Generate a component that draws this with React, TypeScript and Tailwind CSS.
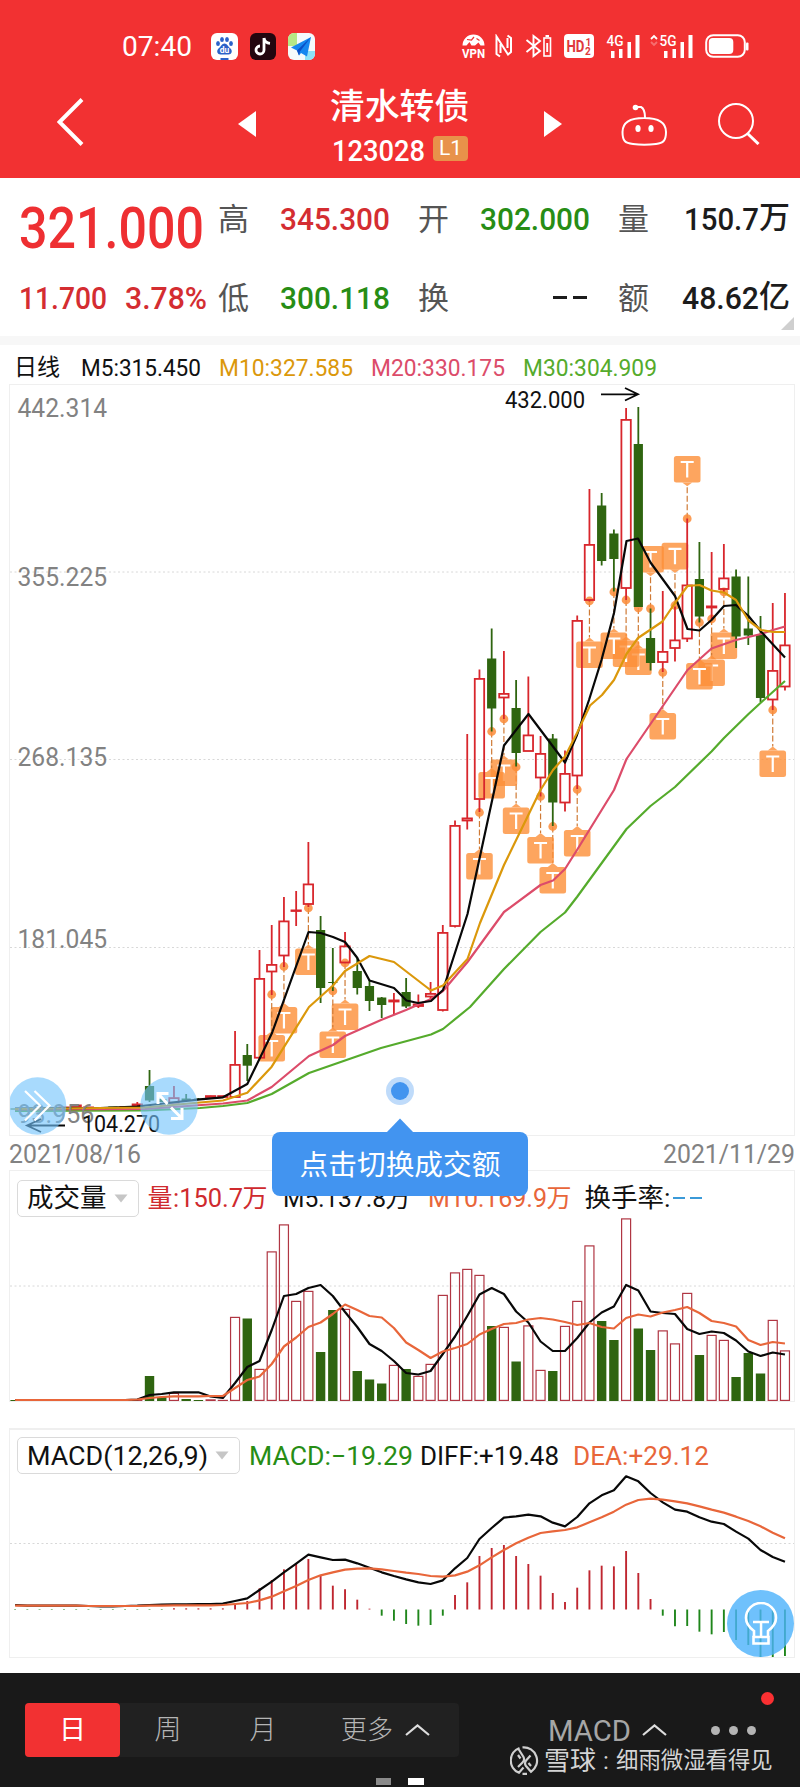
import type { ReactNode } from "react";

type Candle = [up: number, high: number, top: number, bottom: number, low: number];
type Point = [x: number, y: number];

const RED = "#d8262c";
const GREEN = "#2f6510";

const xAt = (i: number) => 15.1 + i * 12.22;

const candles: Candle[] = [
  [0, 1109, 1108.5, 1109.5, 1109],
  [0, 1109, 1108.5, 1109.5, 1109],
  [1, 1109, 1108, 1109, 1109],
  [1, 1109, 1108, 1109, 1109],
  [1, 1108, 1107, 1108, 1108],
  [1, 1106, 1105, 1107, 1107],
  [1, 1107, 1107, 1108, 1108],
  [1, 1108, 1107.5, 1108.5, 1108],
  [0, 1107, 1106.5, 1107.5, 1107],
  [1, 1107, 1106.5, 1107.5, 1107],
  [1, 1102, 1104, 1106, 1106],
  [0, 1070, 1086, 1100.5, 1102],
  [0, 1098, 1099, 1102, 1102],
  [1, 1086, 1097.7, 1102.7, 1103],
  [0, 1094, 1098.5, 1101, 1101],
  [0, 1098, 1098.7, 1100, 1100],
  [1, 1096, 1095.7, 1097, 1097],
  [1, 1096, 1095.7, 1097, 1097],
  [1, 1031, 1064.5, 1097, 1097],
  [0, 1044, 1055, 1065.7, 1081],
  [1, 950, 978.5, 1057.7, 1058],
  [1, 925, 964.5, 971.5, 995],
  [1, 897, 921, 955.5, 967],
  [1, 891, 910, 911, 926],
  [1, 842, 884, 904, 907],
  [0, 916, 930, 988, 1003],
  [0, 948, 982, 983, 991],
  [1, 932, 946, 962.5, 963],
  [0, 957, 971, 988, 994.5],
  [0, 980, 986, 1001, 1011],
  [0, 997, 997.5, 1005, 1018],
  [1, 993, 1000, 1001.5, 1015],
  [0, 978, 992, 1006.5, 1008],
  [1, 994.5, 1004, 1006, 1008],
  [1, 982, 993.5, 996.5, 1000],
  [1, 925, 932.5, 1010, 1011.5],
  [1, 820.5, 825.5, 926, 927.5],
  [1, 734, 818, 820.5, 829.5],
  [1, 669.5, 678.5, 799, 812],
  [0, 628.5, 658.5, 708.5, 731.5],
  [1, 651, 693.5, 697.5, 719],
  [0, 680, 708, 753, 766.5],
  [1, 676.5, 735, 751, 751],
  [1, 736, 753.5, 777.5, 796.5],
  [0, 734, 738.5, 802.5, 826],
  [1, 750.5, 773.5, 802.5, 811.5],
  [1, 615.5, 620.5, 775.5, 789],
  [1, 489, 544.5, 600, 601.5],
  [0, 493, 505.5, 561, 565.5],
  [0, 529.5, 533.5, 559, 591.5],
  [1, 408, 419.5, 588, 600],
  [0, 407, 444, 607, 607],
  [0, 608.5, 638, 663, 670.5],
  [1, 591, 651.5, 662, 672],
  [1, 606.5, 640, 648, 661.5],
  [1, 518.5, 585, 638.5, 642],
  [0, 542, 579, 616.5, 622.5],
  [1, 552, 606, 607.5, 619],
  [1, 544, 578, 589, 593],
  [0, 569.5, 576.5, 636.5, 648],
  [0, 576.5, 628.5, 635.5, 645],
  [0, 616, 634.5, 698, 702],
  [1, 603, 670.5, 699.5, 710],
  [1, 593, 645, 686.5, 690.5],
];

const m5: Point[] = [
  [15, 1108.5], [100, 1108], [137, 1106.5], [168, 1103], [200, 1099.3], [223, 1097.3], [247.3, 1084],
  [272, 1033], [308.5, 932], [320.6, 933], [333, 937], [345, 942], [357, 957.5], [369.5, 980.5],
  [394, 988], [406.5, 1000.5], [418, 1003], [431, 1001], [443, 990], [467.5, 914], [504, 745.5],
  [528.5, 714], [553, 746.5], [565, 762.5], [577, 735], [589, 700], [601.5, 660], [614, 613],
  [626.5, 541], [638, 538.5], [650.5, 562.5], [675, 596], [687.5, 629], [699.5, 630.5], [711.5, 620],
  [724, 606], [736, 605], [748.5, 616], [761, 631.5], [785, 657.5],
];
const m10: Point[] = [
  [15, 1109], [145, 1107.5], [200, 1102.5], [223, 1100.5], [247.3, 1092.7], [271.7, 1066.7], [309, 1007],
  [333, 985.5], [345, 971], [369.5, 956], [394, 962], [431, 990.5], [443, 985.5], [467.5, 959],
  [480, 923], [504, 865], [540.5, 790], [553, 770], [565, 756.5], [577, 733], [590, 705.5],
  [602, 695], [614, 680], [626.5, 654], [638, 638], [662.5, 621.5], [675, 603], [687.5, 586],
  [699.5, 585], [711.5, 590.5], [724, 592.5], [736, 600], [748.5, 620.5], [761, 630], [773, 632], [785, 632],
];
const m20: Point[] = [
  [15, 1109.5], [145, 1109], [223, 1103.5], [247.3, 1100.5], [271.7, 1087], [309, 1056], [333, 1045],
  [345, 1036], [381, 1020], [406, 1010], [431, 999], [443, 991], [467.5, 962], [504, 912],
  [540.5, 885], [553, 880.5], [565, 869], [577, 850], [614, 790], [626.5, 759], [687.5, 670],
  [711.5, 648.5], [736, 640], [761, 634], [773, 630], [785, 626.5],
];
const m30: Point[] = [
  [15, 1111], [145, 1110.5], [200, 1108], [223, 1106], [247.3, 1103], [271.7, 1094], [309, 1073],
  [345, 1060.5], [381, 1048], [431, 1034.5], [443, 1029], [470, 1007], [504, 969], [540.5, 932],
  [565, 912.5], [577, 897], [626.5, 829], [650.5, 806], [675, 787], [711.5, 751.5], [724, 738],
  [748.5, 714], [761, 702.5], [785, 681],
];

// [candle index, anchor y, 1 when the flag hangs above the candle]
const flags: [number, number, number][] = [
  [21, 994.5, 0], [22, 966.5, 0], [24, 908, 0], [26, 991, 0], [27, 963, 0], [38, 812.5, 0], [39, 731.5, 0],
  [40, 719, 0], [41, 767, 0], [43, 796.5, 0], [44, 826.5, 0], [46, 789.5, 0], [47, 601, 0], [49, 592, 0],
  [50, 600, 0], [51, 608, 0], [52, 608.7, 1], [53, 672.5, 0], [54, 605.5, 1], [55, 518.7, 1], [56, 622.5, 0],
  [57, 619, 0], [58, 592, 0], [62, 710, 0],
];

const volumeTops = [
  1400, 1400, 1400, 1400, 1400, 1400, 1400, 1400, 1400, 1400, 1400, 1376, 1397, 1393, 1399, 1400, 1399.5, 1400,
  1317, 1318.5, 1369, 1251.5, 1224.5, 1301, 1291, 1352, 1310, 1309, 1371, 1379.5, 1383.5, 1365, 1369, 1376,
  1364, 1295, 1272.5, 1269, 1275, 1326, 1327, 1361.5, 1325.5, 1370, 1371, 1326, 1301, 1245.5, 1321, 1340,
  1218.5, 1328.5, 1350, 1330.5, 1343.5, 1293, 1355, 1335, 1340, 1377, 1353, 1373.5, 1320, 1350.5,
];
const volM5 = [
  1400, 1400, 1400, 1400, 1400, 1400, 1400, 1400, 1400, 1400, 1399.5, 1395, 1394, 1392.3, 1392.3, 1392.3, 1396.5, 1398,
  1383, 1367, 1361, 1330, 1296, 1294, 1288, 1285, 1296, 1312, 1327, 1344, 1351, 1361, 1373, 1374.5, 1371,
  1354, 1336.5, 1316, 1294.5, 1288, 1294, 1311.5, 1322.5, 1341.5, 1351, 1351, 1338, 1322.5, 1312.5, 1306.5,
  1285, 1290.5, 1311.5, 1313, 1314, 1329, 1334, 1331.5, 1333, 1340.5, 1351.5, 1356, 1352.5, 1354.5,
];
const volM10 = [
  1400, 1400, 1400, 1400, 1400, 1400, 1400, 1400, 1400, 1400, 1399.5, 1398, 1397, 1396.3, 1396.3, 1396.3, 1396, 1396,
  1388, 1380, 1376.5, 1364, 1346.5, 1337.5, 1327, 1322.5, 1314, 1304.5, 1310, 1316, 1317.5, 1328, 1342.5, 1350,
  1358, 1351.5, 1348, 1344, 1334.5, 1329, 1324, 1323, 1319.5, 1318, 1319.5, 1322, 1325, 1323, 1327, 1328.5,
  1318, 1314.5, 1316.5, 1312.5, 1310, 1307, 1313, 1321, 1323, 1326.5, 1340, 1345, 1342, 1343.5,
];

// MACD series are kept at three units per pixel, counted down from y = 1420
const macdBars = [
  570, 570, 570, 570, 570, 570, 570, 570, 570, 570, 570, 570, 570, 565, 565, 565, 565, 565, 552, 543, 505, 480,
  448, 432, 417, 465, 497, 508, 539, 566, 587, 602, 612, 617, 615, 587, 525, 487, 408, 384, 375, 408, 432, 467,
  519, 546, 503, 451, 437, 439, 393, 459, 537, 587, 619, 618, 635, 643, 636, 660, 675, 712, 715, 708,
];
const diff = [
  555, 557, 557, 557, 557, 557, 558, 559, 559, 558, 557, 555, 554, 553, 553, 552, 552, 551, 543, 535, 510, 485,
  457, 431, 404, 412, 420, 419, 430, 443, 457, 468, 478, 487, 492, 481, 445, 414, 357, 324, 293, 289, 284, 289,
  308, 319, 291, 250, 226, 211, 169, 184, 219, 247, 269, 275, 292, 305, 312, 335, 356, 390, 411, 425,
];
const dea = [
  557, 557, 557, 557, 557, 557, 558, 558, 558, 558, 558, 557, 557, 556, 556, 556, 556, 555, 552, 549, 541, 530,
  514, 498, 480, 466, 457, 449, 446, 445, 448, 453, 458, 462, 468, 470, 466, 455, 436, 412, 390, 370, 353, 339,
  334, 330, 322, 307, 292, 275, 254, 240, 236, 239, 244, 250, 259, 269, 278, 290, 303, 319, 338, 355,
];

const toPoints = (points: Point[]) => points.map((p) => p.join(",")).join(" ");
const series = (ys: number[]) => toPoints(ys.map((y, i) => [xAt(i), y]));
const macdY = (v: number) => 1420 + v / 3;

function Line({ points, color }: { points: string; color: string }) {
  return <polyline points={points} fill="none" stroke={color} strokeWidth="2.2" strokeLinejoin="round" />;
}

function GridLine({ y }: { y: number }) {
  return <line x1="10" x2="794" y1={y} y2={y} stroke="#d8d8d8" strokeDasharray="2 2.5" />;
}

function Flag({ i, y, above }: { i: number; y: number; above: boolean }) {
  const x = xAt(i);
  const top = above ? y - 62.7 : y + 40.5;
  const tip = above ? y - 32.5 : y + 36.5;
  const base = above ? top + 26.5 : top;
  return (
    <g>
      <line x1={x} x2={x} y1={y} y2={tip} stroke="#cf7a35" strokeWidth="1.2" strokeDasharray="6 2.5" />
      <circle cx={x} cy={y} r="4.4" fill="#fb8c38" opacity="0.85" />
      <g opacity="0.8">
        <path d={`M${x - 5} ${base}L${x} ${tip}L${x + 5} ${base}Z`} fill="#fd8f38" />
        <rect x={x - 13.3} y={top} width="26.6" height="26.6" rx="2.5" fill="#fd8f38" />
      </g>
      <path d={`M${x - 6.5} ${top + 6}H${x + 6.5}M${x} ${top + 6}V${top + 21.5}`} stroke="#fff" strokeWidth="2.2" />
    </g>
  );
}

function CandleBar({ i, data }: { i: number; data: Candle }) {
  const [up, high, top, bottom, low] = data;
  const x = xAt(i);
  if (!up) {
    return (
      <g fill={GREEN}>
        <rect x={x - 0.9} y={high} width="1.8" height={low - high} />
        <rect x={x - 4.6} y={top} width="9.2" height={bottom - top} />
      </g>
    );
  }
  return (
    <g stroke={RED} strokeWidth="1.8" fill="none">
      <path d={`M${x} ${high}V${top}M${x} ${bottom}V${low}`} />
      <rect x={x - 4.7} y={top + 0.4} width="9.4" height={Math.max(bottom - top - 0.4, 0.3)} />
    </g>
  );
}

function AxisLabel({ y, children }: { y: number; children: string }) {
  return (
    <text x="17.5" y={y} fontSize="25" fill="#828282" textLength={children.length * 12.8} lengthAdjust="spacingAndGlyphs">
      {children}
    </text>
  );
}

function PriceChart() {
  return (
    <svg className="block w-full" viewBox="10 385 784 750">
      <GridLine y={572} />
      <GridLine y={759.5} />
      <GridLine y={947.5} />
      {[...flags].reverse().map(([i, y, above]) => (
        <Flag key={i} i={i} y={y} above={above === 1} />
      ))}
      {candles.map((c, i) => (
        <CandleBar key={i} i={i} data={c} />
      ))}
      <Line points={toPoints(m30)} color="#55ab2c" />
      <Line points={toPoints(m20)} color="#dc4c6a" />
      <Line points={toPoints(m5)} color="#080808" />
      <Line points={toPoints(m10)} color="#db980b" />
      <AxisLabel y={417}>442.314</AxisLabel>
      <AxisLabel y={585.5}>355.225</AxisLabel>
      <AxisLabel y={766}>268.135</AxisLabel>
      <AxisLabel y={948}>181.045</AxisLabel>
      <AxisLabel y={1122.5}>93.956</AxisLabel>
      <g fill="#111" fontSize="23">
        <text x="505" y="407.5" textLength="80" lengthAdjust="spacingAndGlyphs">432.000</text>
        <text x="82" y="1132" textLength="78" lengthAdjust="spacingAndGlyphs">104.270</text>
      </g>
      <g fill="none" stroke="#080808" strokeWidth="1.8">
        <path d="M601 394.3H637M625 388L638 394.3L625 400.5" />
        <path d="M65 1125.5H28M41 1119L27 1125.5L41 1132" />
      </g>
      <circle cx="37.5" cy="1106" r="28.8" fill="#72c4fb" opacity="0.62" />
      <circle cx="169" cy="1106" r="28.8" fill="#72c4fb" opacity="0.62" />
      <g fill="none" stroke="#fff" strokeWidth="2.2">
        <path d="M25 1091L40 1105.5L25 1120.500M34.500 1091L49.500 1105.500L34.500 1120.500" />
        <path strokeWidth="3" d="M158 1104V1093.500H168.500M158.500 1094L167.500 1104M171 1118.500H182V1108M181.500 1118L171 1107.500" />
      </g>
    </svg>
  );
}

function VolumeChart() {
  return (
    <svg className="block w-full" viewBox="10 1217 784 184">
      <GridLine y={1286} />
      {volumeTops.map((top, i) =>
        candles[i][0] ? (
          <rect key={i} x={xAt(i) - 4.5} y={top + 0.4} width="9" height={Math.max(1400 - top, 0.5)} fill="none" stroke="#b03643" strokeWidth="1.2" />
        ) : (
          <rect key={i} x={xAt(i) - 4.7} y={top} width="9.4" height={1401 - top} fill={GREEN} />
        )
      )}
      <Line points={series(volM5)} color="#080808" />
      <Line points={series(volM10)} color="#e8663a" />
    </svg>
  );
}

function MacdChart() {
  return (
    <svg className="block w-full" viewBox="10 1475 784 182">
      <GridLine y={1543.5} />
      {macdBars.map((v, i) => (
        <line key={i} x1={xAt(i)} x2={xAt(i)} y1={1609.5} y2={macdY(v)} stroke={v < 568 ? "#bf2630" : "#1f861b"} strokeWidth="1.9" />
      ))}
      <Line points={series(diff.map(macdY))} color="#080808" />
      <Line points={series(dea.map(macdY))} color="#e8663a" />
    </svg>
  );
}

// Scales a run of digits and letters to the width of the narrow face
function Fit({ width, size, color, weight = 500, children }: { width: number; size: number; color: string; weight?: number; children: string }) {
  return (
    <svg className="block shrink-0 overflow-visible" width={width} height={size}>
      <text y={size * 0.86} fontSize={size} fontWeight={weight} fill={color} textLength={width} lengthAdjust="spacingAndGlyphs">
        {children}
      </text>
    </svg>
  );
}

function StatusBar() {
  return (
    <div className="flex h-7 items-center pl-[122px]">
      <Fit width={70} size={28} color="#fff" weight={400}>07:40</Fit>
      <svg className="ml-[19px] block" width="27" height="27" viewBox="0 0 27 27">
        <rect width="27" height="27" rx="6" fill="#fff" />
        <g fill="#2b62c9">
          <ellipse cx="7" cy="10.500" rx="1.900" ry="2.500" />
          <ellipse cx="11" cy="6.500" rx="1.900" ry="2.500" />
          <ellipse cx="16" cy="6.500" rx="1.900" ry="2.500" />
          <ellipse cx="20" cy="10.500" rx="1.900" ry="2.500" />
          <path d="M13.500 10.500C16 10.500 17 13.500 19.500 15.500C22 18 20.500 21.500 17.500 21.500H9.500C6.500 21.500 5 18 7.500 15.500C10 13.500 11 10.500 13.500 10.500Z" />
          <rect x="9.500" y="25" width="8" height="2" />
        </g>
        <text x="13.500" y="20" fontSize="8.500" fontWeight="700" textAnchor="middle" fill="#fff">du</text>
      </svg>
      <svg className="ml-3 block" width="26" height="27" viewBox="0 0 26 27">
        <rect width="26" height="27" rx="6" fill="#23060f" />
        <path d="M14 5V17A4 4 0 1 1 10 13M14 5C14.500 8.500 16.500 10 20 10.300" fill="none" stroke="#fff" strokeWidth="2.800" />
      </svg>
      <svg className="ml-3 block" width="27" height="27" viewBox="0 0 27 27">
        <rect width="27" height="27" rx="6" fill="#f4fafb" />
        <path d="M6 0H9V13H0V6A6 6 0 0 1 6 0Z" fill="#b6e886" />
        <path d="M17 18H27V21A6 6 0 0 1 21 27H17Z" fill="#8fe2f7" />
        <path d="M23 4L3 14.500L9 17.500L11 22.500L13 20L19 23.500Z" fill="#1687ef" />
        <path d="M23 4L9 17.500L11 22.500L12 18.500Z" fill="#0a4fc6" />
      </svg>

      <svg className="ml-[147px] block overflow-visible" width="23" height="24" viewBox="0 0 23 24">
        <path d="M0.500 11.500A11 11 0 0 1 22.500 11.500H18.500L16.500 8.500L13 11.500H9.500L7.500 8L4.500 11.500Z" fill="#fff" />
        <path d="M5 5.500L9.500 6L12 3M14.500 4.500L17.500 6.500" stroke="#f23132" strokeWidth="1.200" fill="none" />
        <text x="0" y="23.500" fontSize="13.500" fontWeight="700" fill="#fff" textLength="23" lengthAdjust="spacingAndGlyphs">VPN</text>
      </svg>
      <svg className="ml-[10px] block" width="18" height="24" viewBox="0 0 18 24" fill="none" stroke="#fff" strokeWidth="2">
        <path d="M5 22.500L1.500 20V2.500L13 20.500L16 18V4L12.500 1.500M5.500 10V19M12.500 4V14" />
      </svg>
      <svg className="ml-3 block" width="27" height="24" viewBox="0 0 27 24" fill="none" stroke="#fff" strokeWidth="1.900">
        <path d="M1.500 6L15 17L8.500 22V2L15 7L1.500 18" />
        <rect x="19" y="4" width="6.500" height="18" strokeWidth="1.600" />
        <path d="M20.500 2H24M22.200 9V18" />
      </svg>
      <svg className="ml-[12px] block" width="30" height="24" viewBox="0 0 30 24">
        <rect width="30" height="24" rx="4" fill="#fff" />
        <text x="2.500" y="18" fontSize="17" fontWeight="700" fill="#e0393c" textLength="18" lengthAdjust="spacingAndGlyphs">HD</text>
        <text x="21.500" y="11.500" fontSize="10" fontWeight="700" fill="#e0393c">1</text>
        <text x="21" y="21" fontSize="10" fontWeight="700" fill="#e0393c">2</text>
      </svg>
      <svg className="ml-3 block overflow-visible" width="34" height="24" viewBox="0 0 34 24" fill="#fff">
        <text x="0.500" y="12" fontSize="14.500" fontWeight="500" textLength="17" lengthAdjust="spacingAndGlyphs">4G</text>
        <path d="M5 17H8.500V24H5ZM13 15H16.500V24H13ZM21.500 8H25V24H21.500ZM29.500 1H33.500V24H29.500Z" />
      </svg>
      <svg className="ml-[10px] block overflow-visible" width="43" height="24" viewBox="0 0 43 24" fill="#fff">
        <path d="M1 5L4 2L7 5" fill="none" stroke="#fff" strokeWidth="1.800" />
        <path d="M1 8L4 11L7 8" fill="none" stroke="#fff" strokeWidth="1.800" opacity="0.3" />
        <text x="9.500" y="12" fontSize="14.500" fontWeight="500" textLength="17" lengthAdjust="spacingAndGlyphs">5G</text>
        <path d="M14 17H17.500V24H14ZM22.500 15H26V24H22.500ZM30.500 8H34V24H30.500ZM38.500 1H42.500V24H38.500Z" />
      </svg>
      <svg className="ml-3 block" width="44" height="24" viewBox="0 0 44 24">
        <rect x="1.200" y="1.200" width="38.600" height="21.600" rx="7" fill="none" stroke="#fff" strokeWidth="2" />
        <rect x="3.800" y="4" width="24.500" height="16" rx="4" fill="#fff" />
        <rect x="41" y="8.500" width="2.500" height="8" rx="1" fill="#fff" />
      </svg>
    </div>
  );
}

function Header() {
  return (
    <header className="h-[178px] bg-[#f23132] pt-8">
      <StatusBar />
      <div className="mt-[23px] flex h-[78px] items-center">
        <svg className="ml-[57px] block" width="27" height="48" viewBox="0 0 27 48" fill="none" stroke="#fff" strokeWidth="4">
          <path d="M25 1.500L2.500 24L25 46.500" />
        </svg>
        <svg className="ml-[154px] mt-[3px] block" width="18" height="26" viewBox="0 0 18 26">
          <path d="M18 0V26L0 13Z" fill="#fff" />
        </svg>
        <div className="ml-[74px] w-[140px] pt-[6px]">
          <h1 className="text-[34.800px] font-medium leading-[42px] text-white">清水转债</h1>
          <div className="mt-[5px] flex items-center">
            <div className="ml-[2px] mt-[2px]">
              <Fit width={93} size={30} color="#fff">123028</Fit>
            </div>
            <span className="ml-2 flex h-[25px] w-[35px] items-center justify-center rounded-sm bg-[#e8924a] text-[21px] text-white">L1</span>
          </div>
        </div>
        <svg className="ml-[74px] mt-[3px] block" width="18" height="26" viewBox="0 0 18 26">
          <path d="M0 0V26L18 13Z" fill="#fff" />
        </svg>
        <svg className="ml-[59px] mt-[6px] block" width="46" height="42" viewBox="0 0 46 42" fill="none" stroke="#fff" strokeWidth="2">
          <path d="M16 3H20Q24 5 24 13.500M23 14C37 14 45 18 45 28C45 37 42 39 35 40Q23 41.500 12 40C4 39 1.500 37 1.500 28C1.500 18 9 14 23 14Z" />
          <circle cx="14.500" cy="3.500" r="2.800" fill="#fff" stroke="none" />
          <ellipse cx="17" cy="24.500" rx="2.600" ry="3.500" fill="#fff" stroke="none" />
          <ellipse cx="30" cy="24.500" rx="2.600" ry="3.500" fill="#fff" stroke="none" />
        </svg>
        <svg className="ml-[51px] mt-[3px] block" width="42" height="42" viewBox="0 0 42 42" fill="none" stroke="#fff" strokeWidth="2">
          <circle cx="18" cy="18" r="17" />
          <path d="M29.500 30.500L40.500 41" strokeWidth="3" />
        </svg>
      </div>
    </header>
  );
}

function Label({ children }: { children: string }) {
  return <span className="pt-[2px] text-[31px] font-normal leading-8 text-[#555]">{children}</span>;
}

function Value({ children }: { children: ReactNode }) {
  return <span className="flex items-center justify-end text-[31px] font-medium leading-8 text-[#1c1c1c]">{children}</span>;
}

function QuotePanel() {
  return (
    <section className="relative h-[167px] border-b-[9px] border-[#f7f7f7] bg-white pl-[19px] pt-6">
      <div className="grid grid-cols-[171px_31px_113px_31px_113px_31px_113px] grid-rows-[32px_32px] gap-x-7 gap-y-[47px]">
        <div className="-mt-[3px]">
          <Fit width={185} size={57} color="#ee2f32">321.000</Fit>
        </div>
        <Label>高</Label>
        <div className="flex items-center justify-end"><Fit width={110} size={32} color="#d42d31">345.300</Fit></div>
        <Label>开</Label>
        <div className="flex items-center justify-end"><Fit width={110} size={32} color="#278d15">302.000</Fit></div>
        <Label>量</Label>
        <Value><Fit width={75} size={32} color="#1c1c1c">150.7</Fit>万</Value>
        <div className="flex items-center gap-[18px]">
          <Fit width={88} size={32} color="#d42d31">11.700</Fit>
          <Fit width={82} size={32} color="#d42d31">3.78%</Fit>
        </div>
        <Label>低</Label>
        <div className="flex items-center justify-end"><Fit width={110} size={32} color="#278d15">300.118</Fit></div>
        <Label>换</Label>
        <div className="flex items-center justify-end gap-[6px] pr-[3px]">
          <i className="h-[3px] w-[14px] bg-[#1c1c1c]" />
          <i className="h-[3px] w-[14px] bg-[#1c1c1c]" />
        </div>
        <Label>额</Label>
        <Value><Fit width={77} size={32} color="#1c1c1c">48.62</Fit>亿</Value>
      </div>
      <svg className="absolute bottom-[6px] right-[6px]" width="13" height="13" viewBox="0 0 13 13">
        <path d="M13 0V13H0Z" fill="#cfcfcf" />
      </svg>
    </section>
  );
}

function Dropdown({ children }: { children: ReactNode }) {
  return (
    <div className="flex h-[37px] items-center gap-[7px] rounded-[5px] border border-[#dadada] bg-white pl-[9px] pr-[10px] text-[26.500px] leading-none text-[#111]">
      {children}
      <svg className="block" width="14" height="9" viewBox="0 0 14 9">
        <path d="M0.500 0.500H13.500L7 8.500Z" fill="#c6c6c6" />
      </svg>
    </div>
  );
}

function Chevron() {
  return (
    <svg className="block" width="25" height="12" viewBox="0 0 25 12" fill="none" stroke="#ddd" strokeWidth="2.200">
      <path d="M1 11L12.500 1.500L24 11" />
    </svg>
  );
}

function BottomBar() {
  return (
    <footer className="relative h-[114px] bg-[#191919] pt-[30px] text-[27px] font-light text-[#b5b5b5]">
      <div className="flex items-center pl-[25px]">
        <div className="flex h-[54px] w-[434px] items-center rounded bg-[#212121]">
          <span className="flex h-full w-[95px] items-center justify-center rounded bg-[#f23132] pt-[1px] font-normal text-white">日</span>
          <span className="w-24 pt-[1px] text-center">周</span>
          <span className="w-[94px] pt-[1px] text-center">月</span>
          <span className="ml-[31px] pt-[1px] text-[26px]">更多</span>
          <span className="ml-[12px]"><Chevron /></span>
        </div>
        <div className="ml-[89px]"><Fit width={83} size={29} color="#a6a6a6" weight={400}>MACD</Fit></div>
        <span className="ml-[11px]"><Chevron /></span>
        <span className="ml-[44px] flex gap-[9px]">
          <i className="size-[9px] rounded-full bg-[#b4b4b4]" />
          <i className="size-[9px] rounded-full bg-[#b4b4b4]" />
          <i className="size-[9px] rounded-full bg-[#b4b4b4]" />
        </span>
      </div>
      <i className="absolute right-[26px] top-[19px] size-[13px] rounded-full bg-[#fa3032]" />
      <div className="absolute left-[510px] top-[73px] flex h-[29px] items-center text-[#d4d4d4]">
        <svg className="block" width="29" height="29" viewBox="0 0 29 29" fill="none" stroke="#d0d0d0" strokeWidth="2.200">
          <path d="M9.500 2A13.300 13.300 0 0 0 9 26.800L13.500 21.500M12.500 1.400A13.300 13.300 0 0 1 21 25.800L16 20Q13.800 17 16.500 14L20.500 9.500M8.500 3L13.500 11Q15 14 12.500 16.500L8 21M12.500 27.800H17M8 9L10.500 12.500M21 20L18.500 17" />
        </svg>
        <span className="ml-[5px] text-[26px] font-normal leading-none">雪球</span>
        <span className="w-[20px] text-center text-[24px] font-normal leading-none">:</span>
        <span className="text-[22.400px] font-normal leading-none">细雨微湿看得见</span>
      </div>
      <div className="absolute left-[376px] top-[105px] flex gap-[17px]">
        <i className="h-[7px] w-[15px] bg-[#8a8a8a]" />
        <i className="h-[7px] w-4 bg-white" />
      </div>
    </footer>
  );
}

export default function App() {
  return (
    <div className="h-[1787px] w-[800px] overflow-hidden bg-white font-[Roboto,'Noto_Sans_CJK_SC',sans-serif]">
      <Header />
      <QuotePanel />

      <div className="flex h-[39px] items-center pl-[14px] pt-[5px]">
        <span className="w-[67px] text-[23px] leading-none text-[#111]">日线</span>
        <div className="flex gap-[18px]">
          <Fit width={120} size={24.5} color="#111" weight={400}>M5:315.450</Fit>
          <Fit width={134} size={24.5} color="#db980b" weight={400}>M10:327.585</Fit>
          <Fit width={134} size={24.5} color="#dc4c6a" weight={400}>M20:330.175</Fit>
          <Fit width={134} size={24.5} color="#55ab2c" weight={400}>M30:304.909</Fit>
        </div>
      </div>

      <section className="relative ml-[9px] w-[786px] border border-[#efefef]">
        <PriceChart />
        <svg className="absolute left-[376px] top-[692px]" width="28" height="28" viewBox="0 0 28 28">
          <circle cx="14" cy="14" r="14" fill="#bfdbfa" />
          <circle cx="14" cy="14" r="9" fill="#4294ef" />
        </svg>
        <div className="absolute left-[262px] top-[747px] z-10 flex h-[64px] w-[256px] items-center justify-center rounded-lg bg-[#4294f0] pt-[2px] text-[28.700px] leading-none text-white">
          点击切换成交额
          <svg className="absolute -top-[14px] left-[114px]" width="28" height="15" viewBox="0 0 28 15">
            <path d="M0 15L14 0.500L28 15Z" fill="#4294f0" />
          </svg>
        </div>
      </section>

      <div className="flex h-[34px] items-center justify-between pl-[9px] pr-[5px] pt-[1px]">
        <Fit width={132} size={25} color="#828282" weight={400}>2021/08/16</Fit>
        <Fit width={132} size={25} color="#828282" weight={400}>2021/11/29</Fit>
      </div>

      <section className="ml-[9px] w-[786px] border border-[#efefef]">
        <div className="flex h-[46px] items-center pl-[7px] pt-[8px] text-[25px] leading-none">
          <Dropdown>成交量</Dropdown>
          <span className="ml-[9px] flex w-[135px] items-center text-[#cf2a2e]">
            量<Fit width={70} size={26} color="#cf2a2e" weight={400}>:150.7</Fit>万
          </span>
          <span className="flex w-[145px] items-center text-[#111]">
            <Fit width={103} size={26} color="#111" weight={400}>M5:137.8</Fit>万
          </span>
          <span className="flex w-[157px] items-center text-[#e8663a]">
            <Fit width={119} size={26} color="#e8663a" weight={400}>M10:169.9</Fit>万
          </span>
          <span className="text-[26.500px] text-[#111]">换手率:</span>
          <span className="ml-[3px] flex gap-[5px]">
            <i className="h-[2px] w-3 bg-[#3b9ad8]" />
            <i className="h-[2px] w-3 bg-[#3b9ad8]" />
          </span>
        </div>
        <VolumeChart />
      </section>

      <section className="relative ml-[9px] mt-[26px] w-[786px] border border-t-2 border-[#efefef]">
        <div className="flex h-[45px] items-center pl-[7px] pt-[6px]">
          <Dropdown>
            <Fit width={181} size={26} color="#111" weight={400}>MACD(12,26,9)</Fit>
          </Dropdown>
          <div className="ml-[9px] flex">
            <Fit width={164} size={26} color="#278d15" weight={400}>MACD:−19.29</Fit>
            <span className="ml-[7px]"><Fit width={139} size={26} color="#111" weight={400}>DIFF:+19.48</Fit></span>
            <span className="ml-[14px]"><Fit width={136} size={26} color="#e8663a" weight={400}>DEA:+29.12</Fit></span>
          </div>
        </div>
        <MacdChart />
        <div className="absolute bottom-0 right-0 flex size-[67px] items-center justify-center rounded-full bg-[#4bb2fb]/80">
          <svg className="block" width="34" height="44" viewBox="0 0 34 44" fill="none" stroke="#fff" strokeWidth="2.600">
            <path d="M10 35V29C6 26 2 21 2 16A15 15 0 0 1 32 16C32 21 28 26 24 29V35" />
            <path d="M9.500 35H24.500V41.500H9.500ZM9 20H25M17 20V35" />
          </svg>
        </div>
      </section>
      <div className="h-[15px]" />
      <BottomBar />
    </div>
  );
}
